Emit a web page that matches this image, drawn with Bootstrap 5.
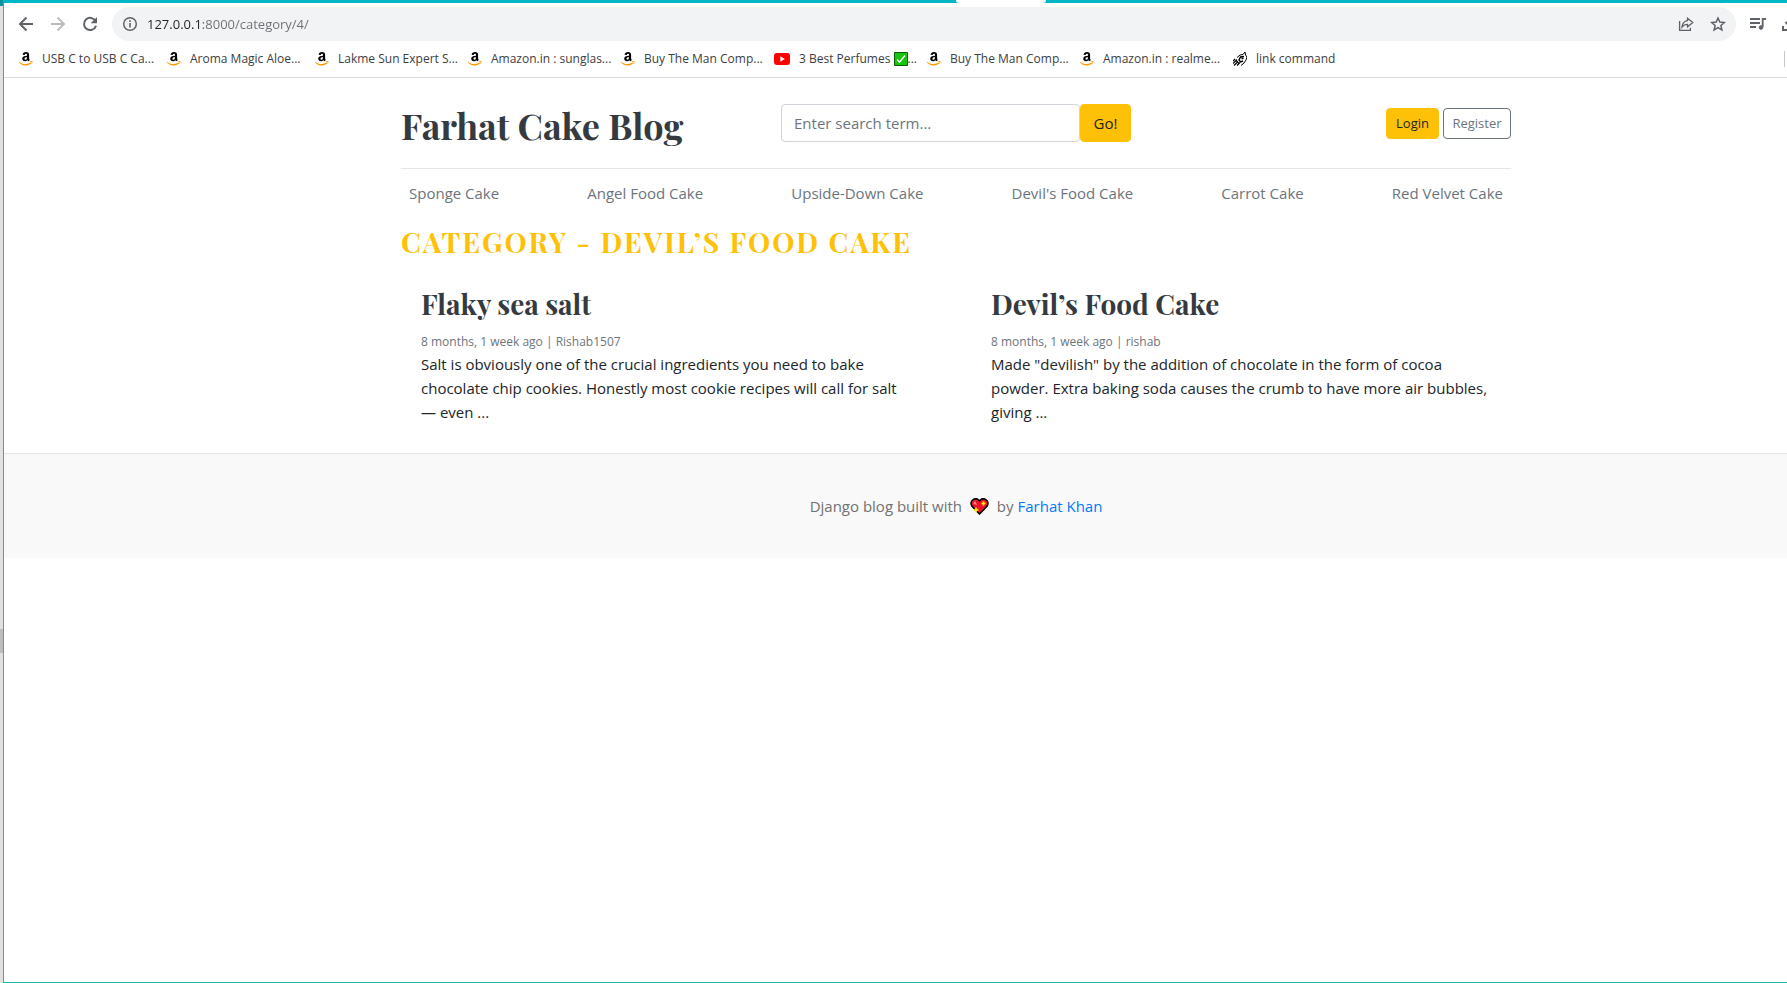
<!DOCTYPE html>
<html lang="en">
<head>
<meta charset="utf-8">
<meta name="viewport" content="width=device-width, initial-scale=1">
<title>Farhat Cake Blog</title>
<link href="https://cdn.jsdelivr.net/npm/bootstrap@5.3.0/dist/css/bootstrap.min.css" rel="stylesheet">
<style>
  body { font-family: "Open Sans", "Noto Sans", sans-serif; font-size: 15px; line-height: 24px; color: #212529; background: #fff; overflow-x: hidden; }
  svg { display: block; flex: none; }
  .desk-edge { width: 3px; flex: none; background: #e1e1e1; border-top: 6px solid #0b919c; }
  .desk-thumb { height: 24px; margin-top: 623px; background: #bdbdbd; }
  .window-frame { border-left: 1px solid #23b3bb; border-bottom: 1px solid #23b3bb; min-width: 0; }
  .tab-strip { height: 3px; background: #00b7c6; }
  .active-tab { width: 90px; height: 3px; margin-left: 952px; background: #fff; border-radius: 0 0 3px 3px; }
  .toolbar { height: 42px; padding: 0 0 0 6px; }
  .tool-btn { width: 32px; height: 32px; padding: 0; border: 0; background: none; color: #5f6368; display: flex; align-items: center; justify-content: center; flex: none; }
  .tool-btn.is-off { color: #babcbe; }
  .omnibox { height: 34px; margin-left: 6px; border-radius: 17px; background: #f1f3f4; color: #5f6368; padding: 0 2px 0 10px; }
  .url-field { border: 0; outline: 0; padding: 0; margin-left: 9px; font-size: 13px; line-height: 20px; color: transparent; background: linear-gradient(to right, #202124 56px, #6b6f73 56px); -webkit-background-clip: text; background-clip: text; }
  .toolbar-end { width: 51px; overflow: hidden; flex: none; padding-left: 14px; gap: 16px; }
  .bookmarks { height: 33px; padding: 0 0 4px 15px; border-bottom: 1px solid #dadce0; font-size: 12px; line-height: 16px; }
  .bookmark { width: 153px; gap: 9px; color: #3c4043; text-decoration: none; white-space: nowrap; flex: none; }
  .bookmark.is-short { width: 148px; }
  .bookmark-divider { width: 3px; height: 16px; border-left: 1px solid #c6c8ca; }
  /* the page is laid out for a window that reaches past the right edge */
  .page-shift { padding-left: 121px; }
  .blog-width { max-width: 1140px; padding: 0 15px; }
  .display-face { font-family: "Playfair Display", "Liberation Serif", serif; font-weight: 700; color: #343a40; margin: 0; }
  .blog-header { height: 91px; border-bottom: 1px solid #e5e5e5; }
  .blog-title { font-size: 36px; line-height: 48px; }
  .display-face a { color: inherit; text-decoration: none; }
  .search-form { width: 350px; }
  .search-form .form-control { height: 38px; font-size: 15px; border-color: #ced4da; color: #495057; border-radius: 4px; }
  .search-form .form-control::placeholder { color: #6c757d; }
  .btn { --bs-btn-border-radius: 4px; }
  .btn-warning { --bs-btn-color: #212529; }
  .go-btn { width: 51px; height: 38px; font-size: 15px; padding: 0; flex: none; }
  .user-btn { height: 31px; font-size: 13px; line-height: 19px; padding: 5px 0; }
  .login-btn { width: 53px; }
  .register-btn { width: 68px; }
  .cat-nav { padding: 12px 8px; }
  .cat-nav a { color: #6c757d; text-decoration: none; }
  .cat-title { font-size: 28px; line-height: 36px; color: #ffc107; letter-spacing: 2px; text-transform: uppercase; padding-top: 7px; margin-bottom: 6px; }
  .post-list { gap: 30px; }
  .post { flex: 1 1 0; padding: 20px 20px 29px; }
  .post-title { font-size: 28px; line-height: 36px; margin-bottom: 10px; }
  .post-meta { font-size: 12px; line-height: 20px; color: #6c757d; }
  .blog-footer { height: 105px; border-top: 1px solid #e5e5e5; background: #f9f9f9; color: #727272; }
  .blog-footer a { color: #007bff; text-decoration: none; }
</style>
</head>
<body>
<svg width="0" height="0" class="position-absolute" aria-hidden="true">
  <symbol id="amazon" viewBox="0 0 14 14">
    <path d="M3.6 2.8C3.8.8 5.200 0 7 0c2 0 3.100.9 3.100 2.900v3.600c0 .7.300 1.100.8 1.600L9.500 9.300c-.5-.3-.8-.7-1.100-1.100-.8.800-1.500 1.100-2.500 1.100-1.600 0-2.700-.9-2.700-2.500C3.200 4.500 5 3.800 8 3.700v-.6c0-.9-.3-1.400-1.100-1.400-.7 0-1.100.4-1.200 1.200zM8 5.200c-1.600 0-2.500.4-2.500 1.500 0 .7.400 1 .9 1C7.500 7.700 8 6.900 8 5.200z" fill="#000"/>
    <path d="M0 9.800c3.600 2.800 8 3 12 .8l.4.600C8.500 14.600 3.200 14.300 0 10.500z" fill="#f90"/>
    <path d="M10.800 9.600c1.100-.6 2-.7 2.700-.4.100 1-.2 2-.9 2.900l-.3-.3c.3-.7.400-1.200.3-1.700-.5-.2-1.100-.2-1.800-.1z" fill="#f90"/>
  </symbol>
</svg>
<div class="d-flex min-vh-100">
  <div class="desk-edge"><div class="desk-thumb"></div></div>
  <div class="window-frame flex-grow-1">
    <div class="tab-strip"><div class="active-tab"></div></div>
    <div class="toolbar d-flex align-items-center bg-white">
      <button class="tool-btn" aria-label="Back"><svg width="16" height="16" viewBox="0 0 16 16" fill="none" stroke="currentColor" stroke-width="2"><path d="M15 8H2.500M8.500 1.500 2 8l6.500 6.500"/></svg></button>
      <button class="tool-btn is-off" aria-label="Forward"><svg width="16" height="16" viewBox="0 0 16 16" fill="none" stroke="currentColor" stroke-width="2"><path d="M1 8h12.500M7.500 1.500 14 8l-6.500 6.500"/></svg></button>
      <button class="tool-btn" aria-label="Reload"><svg width="16" height="16" viewBox="0 0 16 16"><path d="M13.500 5A6.100 6.100 0 1 0 14 9.700" fill="none" stroke="currentColor" stroke-width="2"/><path d="M15 1v6.300H8.700z" fill="currentColor"/></svg></button>
      <div class="omnibox d-flex align-items-center flex-grow-1">
        <svg width="16" height="16" viewBox="0 0 16 16" fill="none" stroke="currentColor"><circle cx="8" cy="8" r="6.300" stroke-width="1.500"/><path d="M8 7v4.500M8 4.300v1.600" stroke-width="1.600"/></svg>
        <input class="url-field flex-grow-1" type="text" aria-label="Address" value="127.0.0.1:8000/category/4/">
        <button class="tool-btn" aria-label="Share"><svg width="16" height="16" viewBox="0 0 16 16" fill="none" stroke="currentColor" stroke-width="1.300"><path d="M1.600 5v9.300h10.800v-2.500"/><path d="M9.500 2.200 14.800 6.500 9.500 10.800V8.300C7 8.300 5.500 9 4 11c.4-3.600 2.200-5.800 5.500-6.300z"/></svg></button>
        <button class="tool-btn" aria-label="Bookmark"><svg width="16" height="16" viewBox="0 0 16 16" fill="none" stroke="currentColor" stroke-width="1.500"><path d="m8 2 1.800 4.100 4.500.4-3.400 3 1 4.400L8 11.600l-3.900 2.300 1-4.400-3.400-3 4.500-.4z"/></svg></button>
      </div>
      <div class="toolbar-end d-flex align-items-center">
        <svg width="16" height="14" viewBox="0 0 16 14" fill="none" stroke="#5f6368" stroke-width="1.800"><path d="M0 2h10M0 6h10M0 10h6M12.700 10V2H16"/><circle cx="11" cy="10.500" r="1.800" fill="#5f6368" stroke-width="1"/></svg>
        <svg width="16" height="16" viewBox="0 0 16 16" fill="none" stroke="#5f6368" stroke-width="2"><path d="M1 10v4h14v-4M8 1v9M3.500 6 8 10.500 12.500 6"/></svg>
      </div>
    </div>
    <nav class="bookmarks d-flex align-items-center" aria-label="Bookmarks">
      <a class="bookmark is-short d-flex align-items-center" href="#"><svg width="14" height="14"><use href="#amazon"/></svg>USB C to USB C Ca...</a>
      <a class="bookmark is-short d-flex align-items-center" href="#"><svg width="14" height="14"><use href="#amazon"/></svg>Aroma Magic Aloe...</a>
      <a class="bookmark d-flex align-items-center" href="#"><svg width="14" height="14"><use href="#amazon"/></svg>Lakme Sun Expert S...</a>
      <a class="bookmark d-flex align-items-center" href="#"><svg width="14" height="14"><use href="#amazon"/></svg>Amazon.in : sunglas...</a>
      <a class="bookmark d-flex align-items-center" href="#"><svg width="14" height="14"><use href="#amazon"/></svg>Buy The Man Comp...</a>
      <a class="bookmark d-flex align-items-center" href="#"><svg width="16" height="12" viewBox="0 0 16 12"><rect width="16" height="12" rx="3" fill="#f00"/><path d="m6.300 3.300 4.500 2.700-4.500 2.700z" fill="#fff"/></svg><span class="d-flex align-items-center">3 Best Perfumes&nbsp;<svg width="14" height="14" viewBox="0 0 14 14"><path d="M.5.500h13v13H.5z" fill="#16c60c" stroke="#0a5c06"/><path d="m3 7.500 2.500 2.700L11 3.500" fill="none" stroke="#fff" stroke-width="1.500"/></svg>...</span></a>
      <a class="bookmark d-flex align-items-center" href="#"><svg width="14" height="14"><use href="#amazon"/></svg>Buy The Man Comp...</a>
      <a class="bookmark d-flex align-items-center" href="#"><svg width="14" height="14"><use href="#amazon"/></svg>Amazon.in : realme...</a>
      <a class="bookmark d-flex align-items-center" href="#"><svg width="14" height="14" viewBox="0 0 14 14" fill="none" stroke="#000"><path d="M4 5.500 7 3l3-.5L12 0l.5 3L14 5l-1 3-2 3-3 2.500"/><path d="M0 9l2-2M0 11.500l4-4M1 13.500l4-4M4 13.500l3-3M2.500 8l3.500 3.500" stroke-width="1.200"/><path d="M11 4.500 7.500 5 6 8l1.500 2L10 9M8.500 6.500h2" stroke-width="1.400"/></svg>link command</a>
      <span class="bookmark-divider ms-auto"></span>
    </nav>

    <div class="page-shift">
      <div class="container blog-width">
        <header class="blog-header d-flex align-items-center justify-content-between">
          <div class="col-4 pt-1"><h1 class="display-face blog-title text-nowrap"><a href="#">Farhat Cake Blog</a></h1></div>
          <form class="search-form d-flex">
            <input class="form-control flex-grow-1" type="search" placeholder="Enter search term..." aria-label="Search">
            <button class="btn btn-warning go-btn" type="submit">Go!</button>
          </form>
          <div class="col-4 d-flex justify-content-end gap-1">
            <a class="btn btn-warning user-btn login-btn" href="#">Login</a>
            <a class="btn btn-outline-secondary user-btn register-btn" href="#">Register</a>
          </div>
        </header>
        <nav class="cat-nav d-flex justify-content-between" aria-label="Categories">
          <a href="#">Sponge Cake</a>
          <a href="#">Angel Food Cake</a>
          <a href="#">Upside-Down Cake</a>
          <a href="#">Devil's Food Cake</a>
          <a href="#">Carrot Cake</a>
          <a href="#">Red Velvet Cake</a>
        </nav>
        <main>
          <h2 class="display-face cat-title">Category - Devil’s Food Cake</h2>
          <div class="post-list d-flex">
            <article class="post">
              <h3 class="display-face post-title"><a href="#">Flaky sea salt</a></h3>
              <div class="post-meta">8 months, 1 week ago | Rishab1507</div>
              <p class="mb-0">Salt is obviously one of the crucial ingredients you need to bake chocolate chip cookies. Honestly most cookie recipes will call for salt —&nbsp;even ...</p>
            </article>
            <article class="post">
              <h3 class="display-face post-title"><a href="#">Devil’s Food Cake</a></h3>
              <div class="post-meta">8 months, 1 week ago | rishab</div>
              <p class="mb-0">Made "devilish" by the addition of chocolate in the form of cocoa powder. Extra baking soda causes the crumb to have more air bubbles, giving ...</p>
            </article>
          </div>
        </main>
      </div>
    </div>
    <footer class="blog-footer page-shift d-flex align-items-center justify-content-center">
      <p class="d-flex align-items-center mb-0">Django blog built with&nbsp;<svg class="mx-1" width="19" height="17" viewBox="0 0 19 17" role="img" aria-label="love"><path d="M9.500 3C11 .6 13.500.3 15.500 1.300c2.700 1.400 3.200 4.500 1.500 7L9.500 16 2 8.300C.3 5.800.8 2.700 3.500 1.300 5.500.3 8 .6 9.500 3z" fill="#e81224" stroke="#000" stroke-width="1.500"/><path d="M3.500 6C3.300 4.500 4 3.500 5.500 3.200L7 7z" fill="#ff7d82"/><path d="M13.500 3.500v4M11.500 5.500h4M6 9.500v5M3.500 12h5" stroke="#fff100" stroke-width="1.600"/></svg>&nbsp;by&nbsp;<a href="#">Farhat Khan</a></p>
    </footer>
  </div>
</div>
<script src="https://cdn.jsdelivr.net/npm/bootstrap@5.3.0/dist/js/bootstrap.bundle.min.js"></script>
</body>
</html>
